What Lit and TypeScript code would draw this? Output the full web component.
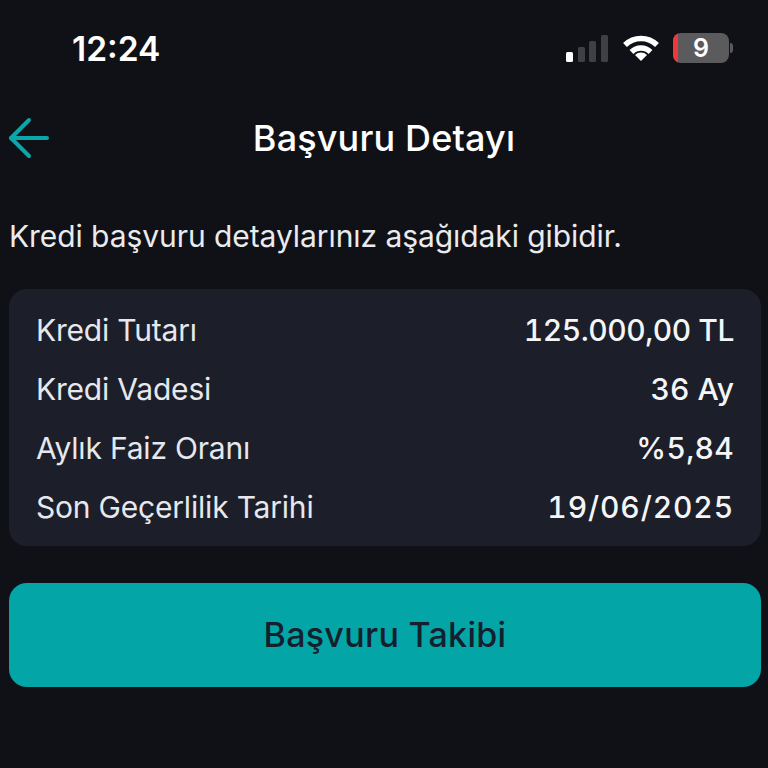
import { LitElement, html, css } from "lit";
import { customElement } from "lit/decorators.js";
import { styleMap } from "lit/directives/style-map.js";

// last column is tracking per value, digits in the original font run wider than Inter's
const rows: [string, string, number][] = [
  ["Kredi Tutarı", "125.000,00 TL", -0.46],
  ["Kredi Vadesi", "36 Ay", 0],
  ["Aylık Faiz Oranı", "%5,84", 0.3],
  ["Son Geçerlilik Tarihi", "19/06/2025", 0.9],
];

@customElement("app-root")
export class AppRoot extends LitElement {
  static styles = css`
    :host {
      display: block;
      width: 768px;
      height: 768px;
      overflow: hidden;
      background: #101116;
      color: #f4f5f7;
      font-family: Inter, "Noto Sans", sans-serif;
    }
    .status {
      height: 100px;
      box-sizing: border-box;
      padding: 28px 35px 0 72px;
      display: flex;
      justify-content: space-between;
      align-items: flex-start;
    }
    .time {
      font-size: 33.5px;
      line-height: 42px;
      font-weight: 600;
      color: #fff;
    }
    .indicators {
      display: flex;
      align-items: center;
      gap: 15px;
      height: 40px;
    }
    .battery {
      position: relative;
      width: 56px;
      height: 30px;
      border-radius: 8px;
      background: #5b5b5e;
      overflow: hidden;
      display: flex;
      align-items: center;
      justify-content: center;
      font-size: 25px;
      font-weight: 600;
      color: #fff;
    }
    .battery::before {
      content: "";
      position: absolute;
      left: 0;
      top: 0;
      bottom: 0;
      width: 5px;
      background: #f0373a;
    }
    .battery-wrap {
      display: flex;
      align-items: center;
      gap: 1px;
      margin-left: -1px;
    }
    .nub {
      width: 3px;
      height: 10px;
      border-radius: 0 3px 3px 0;
      background: #5b5b5e;
    }
    .nav {
      height: 76px;
      position: relative;
      display: flex;
      align-items: center;
      justify-content: center;
    }
    .back {
      position: absolute;
      left: 8px;
      top: 16px;
    }
    .title {
      font-size: 36px;
      font-weight: 500;
      letter-spacing: 0.15px;
      color: #fff;
    }
    .content {
      padding: 0 7px 0 9px;
    }
    .intro {
      margin: 41px 0 34px;
      font-size: 30px;
      line-height: 38px;
      letter-spacing: -0.07px;
      color: #e9ebee;
    }
    .card {
      background: #1c1f2a;
      border-radius: 18px;
      padding: 11px 27px 10px;
      display: flex;
      flex-direction: column;
    }
    .row {
      display: flex;
      justify-content: space-between;
      align-items: center;
      height: 59px;
      font-size: 30px;
    }
    .label {
      color: #e6e8ee;
      letter-spacing: -0.2px;
    }
    .value {
      font-weight: 500;
      color: #f4f5f7;
      font-feature-settings: "tnum";
    }
    .action {
      display: block;
      width: 100%;
      height: 104px;
      margin-top: 37px;
      padding-bottom: 2px;
      border: none;
      border-radius: 18px;
      background: #03a5a7;
      color: #14202e;
      font: 500 34px Inter, "Noto Sans", sans-serif;
      letter-spacing: 0.3px;
    }
  `;

  render() {
    return html`
      <div class="status">
        <span class="time">12:24</span>
        <div class="indicators">
          <svg width="42" height="27" viewBox="0 0 42 27">
            <rect x="0" y="17" width="7" height="10" rx="1.5" fill="#fff" />
            <rect x="12" y="12" width="7" height="15" rx="1.5" fill="#3f4043" />
            <rect x="23" y="6" width="7" height="21" rx="1.5" fill="#3f4043" />
            <rect x="35" y="0" width="7" height="27" rx="1.5" fill="#3f4043" />
          </svg>
          <svg width="36" height="26" viewBox="0 0 36 26" fill="none" stroke="#fff" stroke-width="5.5">
            <path d="M2 10 A23 23 0 0 1 34 10" />
            <path d="M8.5 17 A13.5 13.5 0 0 1 27.5 17" />
            <path d="M18 26 L12 20 A8.5 8.5 0 0 1 24 20 Z" fill="#fff" stroke="none" />
          </svg>
          <div class="battery-wrap">
            <div class="battery">9</div>
            <div class="nub"></div>
          </div>
        </div>
      </div>
      <div class="nav">
        <svg class="back" width="42" height="44" viewBox="0 0 42 44" fill="none" stroke="#0aa6a9" stroke-width="4" stroke-linecap="round" stroke-linejoin="round">
          <path d="M39 22 H3" />
          <path d="M21 4 L3 22 L21 40" />
        </svg>
        <span class="title">Başvuru Detayı</span>
      </div>
      <div class="content">
        <p class="intro">Kredi başvuru detaylarınız aşağıdaki gibidir.</p>
        <div class="card">
          ${rows.map(
            ([label, value, tracking]) => html`
              <div class="row">
                <span class="label">${label}</span>
                <span class="value" style=${styleMap({ letterSpacing: `${tracking}px` })}>${value}</span>
              </div>
            `
          )}
        </div>
        <button class="action">Başvuru Takibi</button>
      </div>
    `;
  }
}
